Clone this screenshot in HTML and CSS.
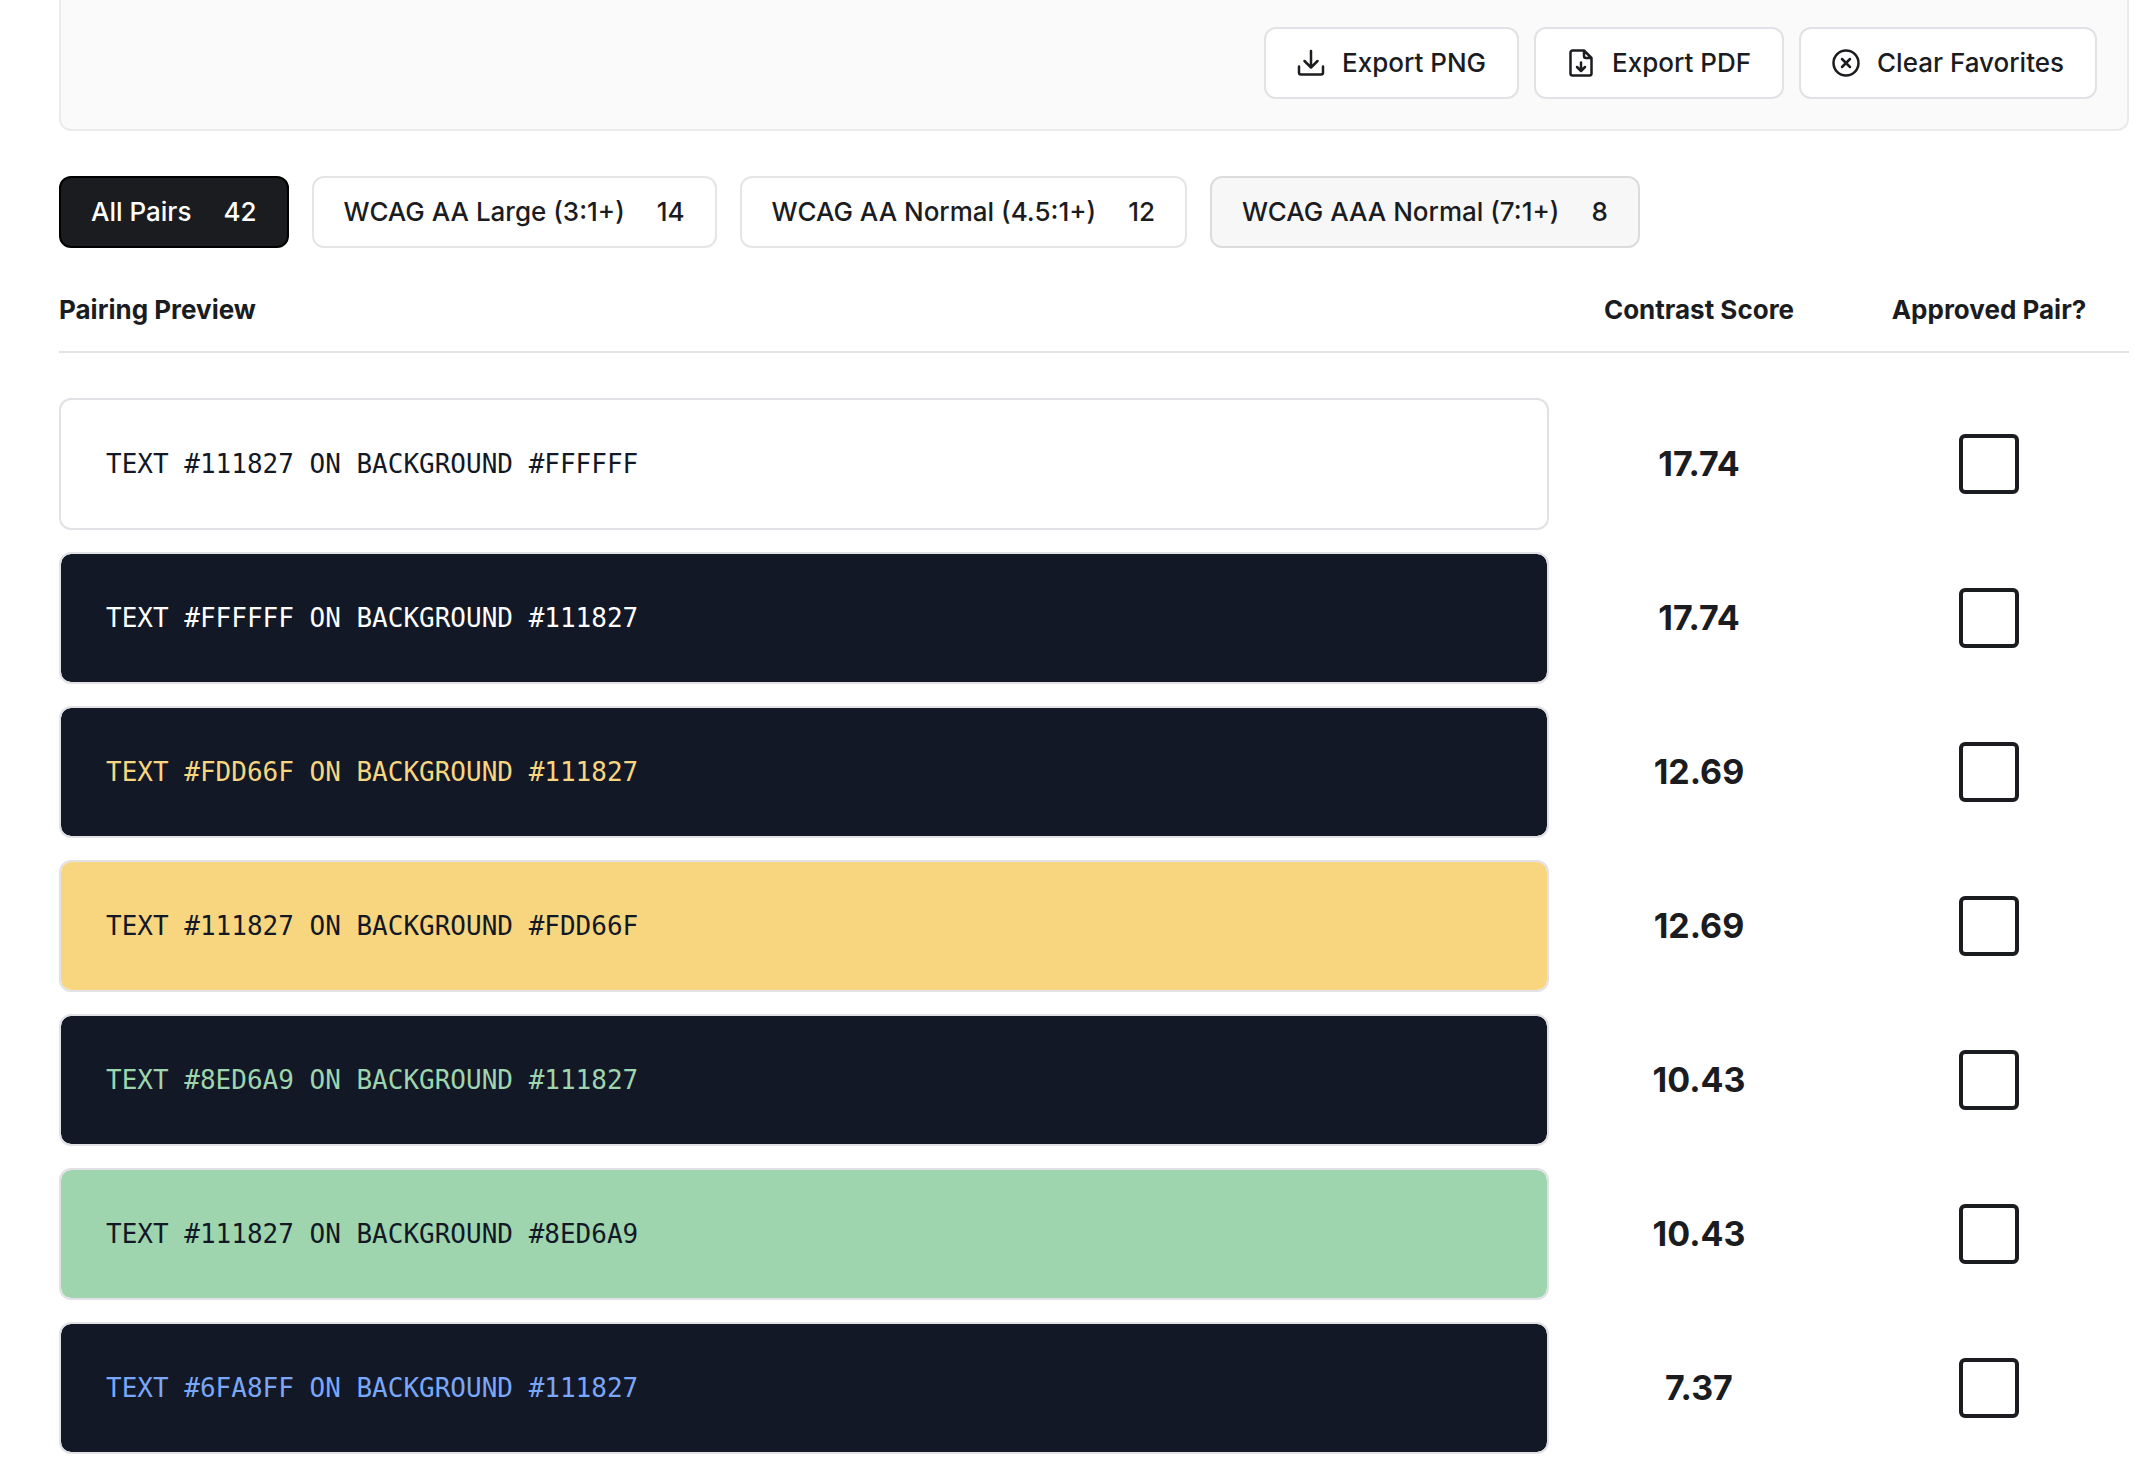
FILE: index.html
```html
<!DOCTYPE html>
<html lang="en">
<head>
<meta charset="utf-8">
<meta name="viewport" content="width=device-width, initial-scale=1">
<title>Color pair contrast</title>
<link rel="stylesheet" href="styles.css">
</head>
<body>
<main class="page">
  <section class="toolbar" aria-label="Favorites">
    <button type="button" class="button">
      <svg class="icon" viewBox="0 0 28 28" aria-hidden="true"><path d="M14 2v16M7.500 12l6.500 6.500 6.500-6.500M2 17.500v6a2 2 0 0 0 2 2h20a2 2 0 0 0 2-2v-6"/></svg>
      Export PNG
    </button>
    <button type="button" class="button">
      <svg class="icon" viewBox="0 0 28 28" aria-hidden="true"><path d="M17 1.500H5.500a2 2 0 0 0-2 2v21a2 2 0 0 0 2 2h17a2 2 0 0 0 2-2V9zM17 1.500V7a2 2 0 0 0 2 2h5.500M14 13.500V21M10 18l4 4 4-4"/></svg>
      Export PDF
    </button>
    <button type="button" class="button">
      <svg class="icon" viewBox="0 0 28 28" aria-hidden="true"><circle cx="14" cy="14" r="12.500"/><path d="M10 10l8 8M18 10l-8 8"/></svg>
      Clear Favorites
    </button>
  </section>

  <nav class="filters" aria-label="Contrast level">
    <button type="button" class="button filter filter-active" aria-pressed="true"><span>All Pairs</span><span>42</span></button>
    <button type="button" class="button filter" aria-pressed="false"><span>WCAG AA Large (3:1+)</span><span>14</span></button>
    <button type="button" class="button filter" aria-pressed="false"><span>WCAG AA Normal (4.5:1+)</span><span>12</span></button>
    <button type="button" class="button filter filter-hover" aria-pressed="false"><span>WCAG AAA Normal (7:1+)</span><span>8</span></button>
  </nav>

  <table class="pairs">
    <thead>
      <tr>
        <th scope="col">Pairing Preview</th>
        <th scope="col" class="col-score">Contrast Score</th>
        <th scope="col" class="col-approve">Approved Pair?</th>
      </tr>
    </thead>
    <tbody>
      <tr>
        <td><div class="swatch on-white">TEXT #111827 ON BACKGROUND #FFFFFF</div></td>
        <td class="score">17.74</td>
        <td class="approve"><input type="checkbox" class="checkbox" aria-label="Approve #111827 on #FFFFFF"></td>
      </tr>
      <tr>
        <td><div class="swatch on-navy text-white">TEXT #FFFFFF ON BACKGROUND #111827</div></td>
        <td class="score">17.74</td>
        <td class="approve"><input type="checkbox" class="checkbox" aria-label="Approve #FFFFFF on #111827"></td>
      </tr>
      <tr>
        <td><div class="swatch on-navy text-yellow">TEXT #FDD66F ON BACKGROUND #111827</div></td>
        <td class="score">12.69</td>
        <td class="approve"><input type="checkbox" class="checkbox" aria-label="Approve #FDD66F on #111827"></td>
      </tr>
      <tr>
        <td><div class="swatch on-yellow">TEXT #111827 ON BACKGROUND #FDD66F</div></td>
        <td class="score">12.69</td>
        <td class="approve"><input type="checkbox" class="checkbox" aria-label="Approve #111827 on #FDD66F"></td>
      </tr>
      <tr>
        <td><div class="swatch on-navy text-green">TEXT #8ED6A9 ON BACKGROUND #111827</div></td>
        <td class="score">10.43</td>
        <td class="approve"><input type="checkbox" class="checkbox" aria-label="Approve #8ED6A9 on #111827"></td>
      </tr>
      <tr>
        <td><div class="swatch on-green">TEXT #111827 ON BACKGROUND #8ED6A9</div></td>
        <td class="score">10.43</td>
        <td class="approve"><input type="checkbox" class="checkbox" aria-label="Approve #111827 on #8ED6A9"></td>
      </tr>
      <tr>
        <td><div class="swatch on-navy text-blue">TEXT #6FA8FF ON BACKGROUND #111827</div></td>
        <td class="score">7.37</td>
        <td class="approve"><input type="checkbox" class="checkbox" aria-label="Approve #6FA8FF on #111827"></td>
      </tr>
    </tbody>
  </table>
</main>
</body>
</html>
```

FILE: styles.css
```css
:root {
  --ink: #1b1c1f;
  --navy: #121826;
  --yellow: #f7d67f;
  --green: #9ed5ae;
  --blue: #7aa7f8;
  --line: #e1e1e6;
}

* {
  box-sizing: border-box;
}

body {
  margin: 0;
  background: #fff;
  color: var(--ink);
  font-family: Inter, "Liberation Sans", sans-serif;
  font-size: 26px;
  line-height: 32px;
}

.page {
  padding: 0 11px 0 59px;
}

.toolbar {
  display: flex;
  flex-wrap: wrap;
  justify-content: flex-end;
  gap: 15px;
  padding: 27px 30px 30px;
  background: #fafafa;
  border: 2px solid #ebebec;
  border-top: 0;
  border-radius: 0 0 12px 12px;
}

.button {
  display: flex;
  align-items: center;
  gap: 17px;
  padding: 18px 30px;
  border: 2px solid var(--line);
  border-radius: 12px;
  background: #fff;
  color: inherit;
  font: inherit;
  font-weight: 500;
  cursor: pointer;
}

.toolbar .button {
  padding: 18px 31px;
}

.icon {
  width: 28px;
  height: 28px;
  fill: none;
  stroke: currentColor;
  stroke-width: 2.500;
  stroke-linecap: round;
  stroke-linejoin: round;
}

.filters {
  display: flex;
  flex-wrap: wrap;
  gap: 23px;
  margin-top: 45px;
}

.filter {
  gap: 32px;
  border-color: #e5e5e5;
}

.filter-active {
  background: var(--ink);
  border-color: #000;
  color: #fff;
}

.filter-hover {
  background: #f7f7f7;
  border-color: #dcdcdc;
}

.pairs {
  width: 100%;
  margin-top: 46px;
  border-spacing: 0;
  table-layout: fixed;
}

.pairs th {
  padding: 0 0 25px;
  border-bottom: 2px solid var(--line);
  font-weight: 700;
  text-align: left;
}

.pairs .col-score {
  width: 300px;
  text-align: center;
}

.pairs .col-approve {
  width: 280px;
  text-align: center;
}

.pairs td {
  padding: 0 0 22px;
}

.pairs tbody tr:first-child td {
  padding-top: 45px;
}

.swatch {
  padding: 48px 45px;
  border: 2px solid var(--line);
  border-radius: 12px;
  background-clip: padding-box;
  color: var(--navy);
  font-family: "DejaVu Sans Mono", monospace;
}

.on-white { background-color: #fff; }
.on-navy { background-color: var(--navy); }
.on-yellow { background-color: var(--yellow); }
.on-green { background-color: var(--green); }

.text-white { color: #fff; }
.text-yellow { color: var(--yellow); }
.text-green { color: var(--green); }
.text-blue { color: var(--blue); }

.score {
  font-size: 34px;
  font-weight: 700;
  text-align: center;
}

.approve {
  text-align: center;
}

.checkbox {
  display: block;
  width: 60px;
  height: 60px;
  margin: 0 auto;
  appearance: none;
  border: 4px solid var(--ink);
  border-radius: 6px;
  background: #fff;
  cursor: pointer;
}

.checkbox:checked {
  background: var(--ink);
  box-shadow: inset 0 0 0 8px #fff;
}
```
